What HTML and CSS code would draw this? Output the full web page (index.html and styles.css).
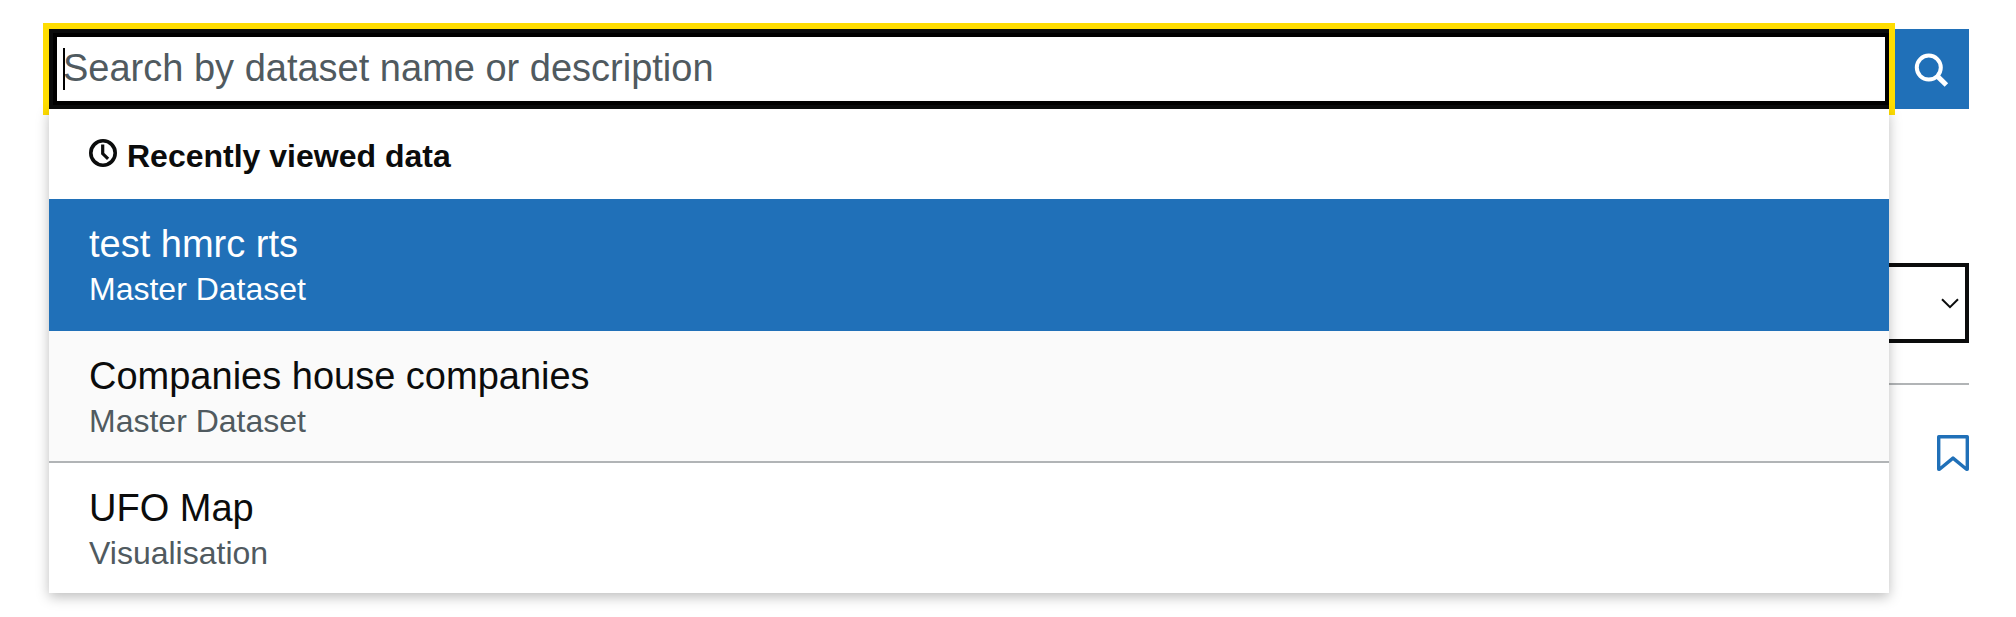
FILE: index.html
```html
<!DOCTYPE html>
<html lang="en">
<head>
  <meta charset="utf-8">
  <title>Search data</title>
  <link rel="stylesheet" href="styles.css">
</head>
<body>
  <main class="page">
    <form class="search">
      <div class="search-field">
        <input class="search-input" type="text" placeholder="Search by dataset name or description" aria-label="Search">
        <span class="caret"></span>
        <div class="menu">
          <div class="menu-header">
            <svg class="clock" viewBox="0 0 28 28" aria-hidden="true">
              <circle cx="14" cy="14" r="12.2"/>
              <path d="M13.700 5.600v9l5.400 5.200"/>
            </svg>
            <span class="menu-heading">Recently viewed data</span>
          </div>
          <ul class="options">
            <li class="option option-active">
              <span class="option-name">test hmrc rts</span>
              <span class="option-type">Master Dataset</span>
            </li>
            <li class="option option-odd">
              <span class="option-name">Companies house companies</span>
              <span class="option-type">Master Dataset</span>
            </li>
            <li class="option">
              <span class="option-name">UFO Map</span>
              <span class="option-type">Visualisation</span>
            </li>
          </ul>
        </div>
      </div>
      <button class="search-button" type="button" aria-label="Search">
        <svg class="magnifier" viewBox="0 0 36 36" aria-hidden="true">
          <circle cx="14.8" cy="14.6" r="12"/>
          <path d="M22.800 22.600l9.600 9.400"/>
        </svg>
      </button>
    </form>
    <div class="sort">
      <svg class="chevron" viewBox="0 0 18 11" aria-hidden="true">
        <path d="M1 1.200l8 8 8-8"/>
      </svg>
    </div>
    <hr class="divider">
    <div class="result">
      <svg class="bookmark" viewBox="0 0 32 36" aria-hidden="true">
        <path d="M1.700 1.700h28.600v32.600h-.800L16 23.100 2.500 34.300h-.800z"/>
      </svg>
    </div>
  </main>
</body>
</html>
```
FILE: styles.css
```css
* {
  box-sizing: border-box;
}

body {
  margin: 0;
  height: 617px;
  overflow: hidden;
  background: #fff;
  color: #0b0c0c;
  font-family: "Liberation Sans", Arial, sans-serif;
}

.page {
  display: flex;
  flex-direction: column;
  padding: 29px 47px 0 49px;
}

.search {
  display: flex;
  height: 80px;
}

.search-field {
  position: relative;
  z-index: 1;
  flex: 1;
}

.search-input {
  display: block;
  width: 100%;
  height: 80px;
  margin: 0;
  padding: 0 10px 1px;
  border: 4px solid #0b0c0c;
  border-right: 0;
  border-radius: 0;
  outline: 6px solid #fd0;
  box-shadow: inset 0 0 0 4px #000;
  background: #fff;
  color: #0b0c0c;
  font: 38px "Liberation Sans", Arial, sans-serif;
}

.search-input::placeholder {
  color: #505a5f;
  opacity: 1;
}

.caret {
  position: absolute;
  top: 19px;
  left: 14px;
  width: 2px;
  height: 42px;
  background: #000;
}

.search-button {
  display: flex;
  width: 80px;
  padding: 24px 0 0 25px;
  border: 0;
  background: #2070b8;
}

.magnifier {
  width: 36px;
  height: 36px;
  fill: none;
  stroke: #fff;
  stroke-width: 4;
}

.magnifier path {
  stroke-width: 5;
}

.menu {
  position: absolute;
  top: 100%;
  left: 0;
  right: 0;
  background: #fff;
  box-shadow: 0 4px 12px rgba(0, 0, 0, 0.257);
}

.menu-header {
  display: flex;
  gap: 10px;
  height: 90px;
  padding: 27px 40px 0;
}

.clock {
  width: 28px;
  height: 28px;
  margin-top: 3px;
  fill: none;
  stroke: #0b0c0c;
  stroke-width: 3.6;
}

.clock path {
  stroke-width: 3.2;
}

.menu-heading {
  font-size: 32px;
  font-weight: 700;
  line-height: 40px;
}

.options {
  margin: 0;
  padding: 0;
  list-style: none;
}

.option {
  display: flex;
  flex-direction: column;
  padding: 20px 40px;
  border-bottom: 2px solid #b1b4b6;
}

.option:last-child {
  border-bottom: 0;
}

.option-odd {
  background: #fafafa;
}

.option-name {
  font-size: 38px;
  line-height: 50px;
}

.option-type {
  color: #505a5f;
  font-size: 32px;
  line-height: 40px;
}

.option-active {
  border-color: #2070b8;
  background: #2070b8;
  color: #fff;
}

.option-active .option-type {
  color: #fff;
}

.sort {
  display: flex;
  align-items: center;
  justify-content: flex-end;
  height: 80px;
  margin-top: 154px;
  padding-right: 6px;
  border: 4px solid #0b0c0c;
}

.chevron {
  width: 18px;
  height: 11px;
  fill: none;
  stroke: #0b0c0c;
  stroke-width: 2;
}

.divider {
  width: 100%;
  height: 2px;
  margin: 40px 0 50px;
  border: 0;
  background: #b1b4b6;
}

.result {
  display: flex;
  justify-content: flex-end;
}

.bookmark {
  width: 32px;
  height: 36px;
  fill: none;
  stroke: #2070b8;
  stroke-width: 3.4;
  stroke-linejoin: round;
}
```
